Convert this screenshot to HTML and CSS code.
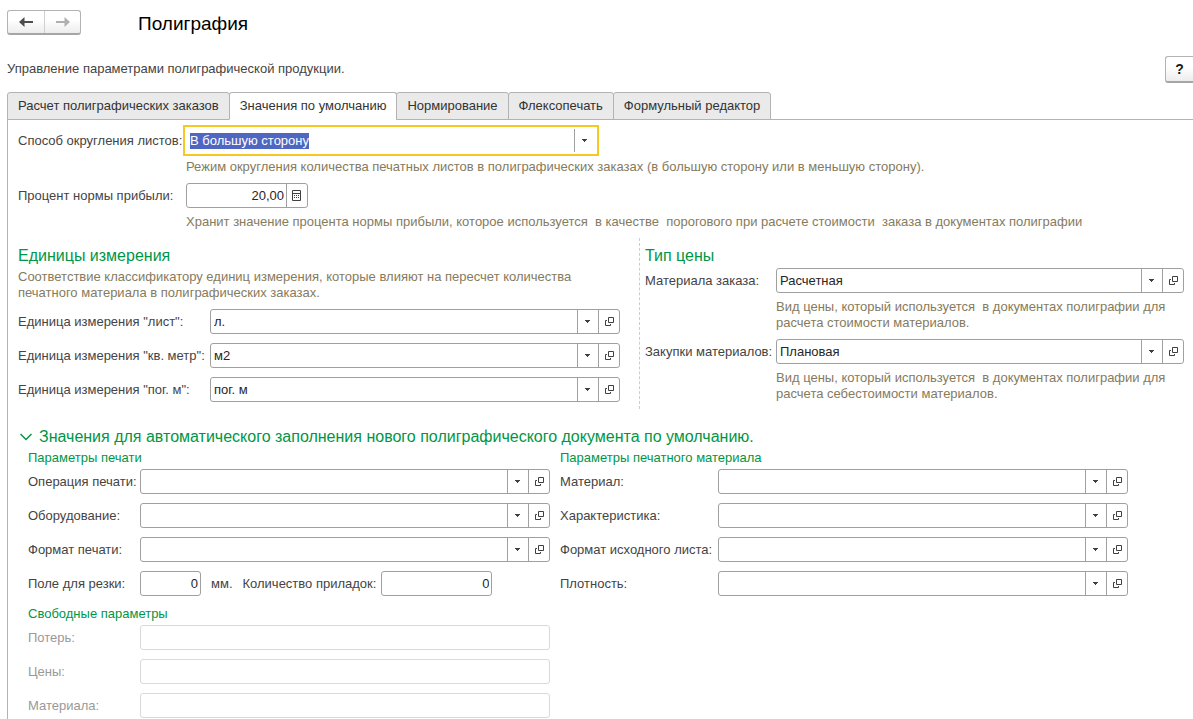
FILE: index.html
```html
<!DOCTYPE html>
<html lang="ru">
<head>
<meta charset="utf-8">
<title>Полиграфия</title>
<link rel="stylesheet" href="styles.css">
</head>
<body>
<svg class="sprite" aria-hidden="true">
  <symbol id="i-down" viewBox="0 0 6 3"><path d="M0 0h5v1h-1v1h-1v1h-1v-1h-1v-1h-1z" fill="#404040"/></symbol>
  <symbol id="i-open" viewBox="-1 0 10 9"><path d="M3.500.5h5v5h-5zM2 3.500H.5v5h5V7" fill="none" stroke="#404040"/></symbol>
</svg>

<header class="top">
  <div class="nav">
    <button class="nav-btn" type="button" aria-label="Назад"><svg width="14" height="10" viewBox="0 0 14 10"><path d="M0 5 5.500 0v4H14v2H5.500v4z" fill="#4d4d4d"/></svg></button>
    <button class="nav-btn" type="button" aria-label="Вперед"><svg width="14" height="10" viewBox="0 0 14 10"><path d="M14 5 8.500 0v4H0v2h8.500v4z" fill="#b0b0b0"/></svg></button>
  </div>
  <h1 class="title">Полиграфия</h1>
</header>

<div class="intro">
  <p class="intro-text">Управление параметрами полиграфической продукции.</p>
  <button class="help" type="button">?</button>
</div>

<div class="tabs" role="tablist">
  <button class="tab" type="button" role="tab">Расчет полиграфических заказов</button>
  <button class="tab tab-active" type="button" role="tab" aria-selected="true">Значения по умолчанию</button>
  <button class="tab" type="button" role="tab">Нормирование</button>
  <button class="tab" type="button" role="tab">Флексопечать</button>
  <button class="tab" type="button" role="tab">Формульный редактор</button>
</div>

<main class="panel">
  <section class="general">
    <label for="round">Способ округления листов:</label>
    <div class="field field-focus"><input id="round" value="В большую сторону"><button type="button" aria-label="Выбрать"><svg width="6" height="3"><use href="#i-down"/></svg></button></div>
    <p class="hint">Режим округления количества печатных листов в полиграфических заказах (в большую сторону или в меньшую сторону).</p>
    <label for="profit">Процент нормы прибыли:</label>
    <div class="field field-calc"><input id="profit" class="num" value="20,00"><button type="button" aria-label="Калькулятор"><svg width="10" height="11" viewBox="0 0 10 11"><path d="M.5.500h8v10h-8zM1 3.500h7" fill="none" stroke="#404040"/><path d="M2 5.500h5M2 7.500h5" fill="none" stroke="#404040" stroke-dasharray="1 1"/></svg></button></div>
    <p class="hint">Хранит значение процента нормы прибыли, которое используется  в качестве  порогового при расчете стоимости  заказа в документах полиграфии</p>
  </section>

  <div class="pair">
    <section class="units">
      <h2 class="heading">Единицы измерения</h2>
      <p class="hint">Соответствие классификатору единиц измерения, которые влияют на пересчет количества печатного материала в полиграфических заказах.</p>
      <div class="rows rows-units">
        <label for="u1">Единица измерения "лист":</label>
        <div class="field"><input id="u1" value="л."><button type="button" aria-label="Выбрать"><svg width="6" height="3"><use href="#i-down"/></svg></button><button type="button" aria-label="Открыть"><svg width="10" height="9"><use href="#i-open"/></svg></button></div>
        <label for="u2">Единица измерения "кв. метр":</label>
        <div class="field"><input id="u2" value="м2"><button type="button" aria-label="Выбрать"><svg width="6" height="3"><use href="#i-down"/></svg></button><button type="button" aria-label="Открыть"><svg width="10" height="9"><use href="#i-open"/></svg></button></div>
        <label for="u3">Единица измерения "пог. м":</label>
        <div class="field"><input id="u3" value="пог. м"><button type="button" aria-label="Выбрать"><svg width="6" height="3"><use href="#i-down"/></svg></button><button type="button" aria-label="Открыть"><svg width="10" height="9"><use href="#i-open"/></svg></button></div>
      </div>
    </section>
    <section class="prices">
      <h2 class="heading">Тип цены</h2>
      <div class="price-rows">
        <label for="p1">Материала заказа:</label>
        <div class="field"><input id="p1" value="Расчетная"><button type="button" aria-label="Выбрать"><svg width="6" height="3"><use href="#i-down"/></svg></button><button type="button" aria-label="Открыть"><svg width="10" height="9"><use href="#i-open"/></svg></button></div>
        <p class="hint">Вид цены, который используется  в документах полиграфии для расчета стоимости материалов.</p>
        <label for="p2">Закупки материалов:</label>
        <div class="field"><input id="p2" value="Плановая"><button type="button" aria-label="Выбрать"><svg width="6" height="3"><use href="#i-down"/></svg></button><button type="button" aria-label="Открыть"><svg width="10" height="9"><use href="#i-open"/></svg></button></div>
        <p class="hint">Вид цены, который используется  в документах полиграфии для расчета себестоимости материалов.</p>
      </div>
    </section>
  </div>

  <section class="defaults">
    <h2 class="heading heading-fold"><svg width="12" height="8" viewBox="0 0 12 8"><path d="M.5 1 6 6.500 11.500 1" fill="none" stroke="#009646" stroke-width="1.500"/></svg>Значения для автоматического заполнения нового полиграфического документа по умолчанию.</h2>
    <div class="columns">
      <div>
        <h3 class="subheading">Параметры печати</h3>
        <div class="rows rows-print">
          <label for="d1">Операция печати:</label>
          <div class="field"><input id="d1"><button type="button" aria-label="Выбрать"><svg width="6" height="3"><use href="#i-down"/></svg></button><button type="button" aria-label="Открыть"><svg width="10" height="9"><use href="#i-open"/></svg></button></div>
          <label for="d2">Оборудование:</label>
          <div class="field"><input id="d2"><button type="button" aria-label="Выбрать"><svg width="6" height="3"><use href="#i-down"/></svg></button><button type="button" aria-label="Открыть"><svg width="10" height="9"><use href="#i-open"/></svg></button></div>
          <label for="d3">Формат печати:</label>
          <div class="field"><input id="d3"><button type="button" aria-label="Выбрать"><svg width="6" height="3"><use href="#i-down"/></svg></button><button type="button" aria-label="Открыть"><svg width="10" height="9"><use href="#i-open"/></svg></button></div>
          <label for="d4">Поле для резки:</label>
          <div class="inline">
            <div class="field field-cut"><input id="d4" class="num" value="0"></div>
            <span class="unit">мм.</span>
            <label for="d5">Количество приладок:</label>
            <div class="field field-count"><input id="d5" class="num" value="0"></div>
          </div>
        </div>
        <h3 class="subheading subheading-free">Свободные параметры</h3>
        <div class="rows rows-print rows-off">
          <label for="f1">Потерь:</label>
          <div class="field"><input id="f1" disabled></div>
          <label for="f2">Цены:</label>
          <div class="field"><input id="f2" disabled></div>
          <label for="f3">Материала:</label>
          <div class="field"><input id="f3" disabled></div>
        </div>
      </div>
      <div>
        <h3 class="subheading">Параметры печатного материала</h3>
        <div class="rows rows-material">
          <label for="m1">Материал:</label>
          <div class="field"><input id="m1"><button type="button" aria-label="Выбрать"><svg width="6" height="3"><use href="#i-down"/></svg></button><button type="button" aria-label="Открыть"><svg width="10" height="9"><use href="#i-open"/></svg></button></div>
          <label for="m2">Характеристика:</label>
          <div class="field"><input id="m2"><button type="button" aria-label="Выбрать"><svg width="6" height="3"><use href="#i-down"/></svg></button><button type="button" aria-label="Открыть"><svg width="10" height="9"><use href="#i-open"/></svg></button></div>
          <label for="m3">Формат исходного листа:</label>
          <div class="field"><input id="m3"><button type="button" aria-label="Выбрать"><svg width="6" height="3"><use href="#i-down"/></svg></button><button type="button" aria-label="Открыть"><svg width="10" height="9"><use href="#i-open"/></svg></button></div>
          <label for="m4">Плотность:</label>
          <div class="field"><input id="m4"><button type="button" aria-label="Выбрать"><svg width="6" height="3"><use href="#i-down"/></svg></button><button type="button" aria-label="Открыть"><svg width="10" height="9"><use href="#i-open"/></svg></button></div>
        </div>
      </div>
    </div>
  </section>
</main>
<script src="main.js"></script>
</body>
</html>
```

FILE: styles.css
```css
* { box-sizing: border-box; }

body {
  display: flex;
  flex-direction: column;
  min-height: 100vh;
  margin: 0;
  padding: 10px 0 0 7px;
  background: #fff;
  color: #444;
  font: 13px/16px "Liberation Sans", Arial, sans-serif;
}

h1, h2, h3, p { margin: 0; font-weight: normal; }
button, input { font: inherit; color: inherit; }
.sprite { display: none; }

.top {
  display: flex;
  align-items: center;
  gap: 57px;
}

.nav {
  display: flex;
  border: 1px solid #b3b3b3;
  border-bottom: 2px solid #a6a6a6;
  border-radius: 3px;
  background: linear-gradient(#fff 40%, #ededed);
}

.nav-btn {
  display: flex;
  align-items: center;
  justify-content: center;
  width: 36px;
  height: 22px;
  padding: 0;
  border: 0;
  background: none;
}
.nav-btn + .nav-btn { border-left: 1px solid #d0d0d0; }

.title {
  padding-top: 2px;
  color: #000;
  font-size: 19px;
  line-height: 23px;
}

.intro {
  display: flex;
  align-items: center;
  justify-content: space-between;
  margin-top: 21px;
}

.intro-text { padding-bottom: 2px; }

.help {
  width: 28px;
  height: 27px;
  padding: 0;
  border: 1px solid #b3b3b3;
  border-right: 0;
  border-bottom: 2px solid #a6a6a6;
  border-radius: 3px 0 0 3px;
  background: linear-gradient(#fff 40%, #ededed);
  color: #1a1a1a;
  font-size: 14px;
  font-weight: bold;
}

.tabs {
  display: flex;
  margin-top: 9px;
  box-shadow: inset 0 -1px #b3b3b3;
}

.tab {
  height: 28px;
  padding: 0 10px;
  border: 1px solid #b3b3b3;
  border-radius: 3px 3px 0 0;
  background: #eaeaea;
  color: #333;
  white-space: nowrap;
}
.tab + .tab { margin-left: -1px; }
.tab-active { border-bottom-color: #fff; background: #fff; }

.panel {
  flex: 1;
  padding: 8px 9px 1px 10px;
  border-left: 1px solid #b3b3b3;
}

label { line-height: 25px; white-space: nowrap; }
.hint { color: #857b5e; white-space: pre-wrap; }

.field {
  display: flex;
  height: 25px;
  min-width: 0;
  border: 1px solid #a0a0a0;
  border-radius: 3px;
  background: #fff;
}

.field input {
  flex: 1;
  width: 0;
  min-width: 0;
  padding: 0 3px;
  border: 0;
  outline: 0;
  background: none;
  color: #262626;
}
.field .num { padding-right: 2px; text-align: right; }

.field button {
  display: flex;
  align-items: center;
  justify-content: center;
  width: 21px;
  padding: 0;
  border: 0;
  border-left: 1px solid #a0a0a0;
  background: none;
}
.field svg { flex: none; }

.general {
  display: grid;
  grid-template-columns: 168px 410fr 588fr;
}
.general .hint { grid-column: 2 / -1; margin: 6px 0 8px; }
.general label { grid-column: 1; }
.general .field-focus {
  border-color: #fff;
  border-radius: 0;
  outline: 2px solid #f8c822;
  outline-offset: 1px;
}
.field-focus input::selection { background: #4f67c2; color: #fff; }
.field-calc { width: 122px; }

.heading {
  color: #009646;
  font-size: 16px;
  line-height: 20px;
}

.pair {
  display: grid;
  grid-template-columns: 602fr 545fr;
  gap: 19px;
}
.units { padding-top: 8px; }
.units .hint { max-width: 560px; margin: 3px 0 8px; }
.prices {
  padding: 8px 0 7px 5px;
  border-left: 1px dashed #ccc;
}

.rows {
  display: grid;
  gap: 9px 0;
}
.rows-units { grid-template-columns: 192px 1fr; }
.rows-print { grid-template-columns: 112px 1fr; }
.rows-material { grid-template-columns: 158px 1fr; }

.price-rows {
  display: grid;
  grid-template-columns: 131px 1fr;
  margin-top: 2px;
}
.price-rows .hint { grid-column: 2; margin: 6px 0 8px; }
.price-rows .hint:last-child { margin-bottom: 0; }

.defaults { margin-top: 18px; }
.heading-fold {
  display: flex;
  align-items: center;
  gap: 7px;
  padding-left: 2px;
}
.columns {
  display: grid;
  grid-template-columns: 522fr 568fr 46fr;
  gap: 10px;
  margin: 3px 0 0 10px;
}
.subheading {
  margin-bottom: 3px;
  color: #009646;
  font-size: 13px;
}
.subheading-free { margin: 10px 0 3px; }

.inline { display: flex; }
.field-cut { width: 61px; }
.field-count { width: 111px; margin-left: 5px; }
.unit { margin: 0 10px; line-height: 25px; }

.rows-off label { color: #999; }
.rows-off .field { border-color: #d9d9d9; }
```

FILE: main.js
```js
const round = document.getElementById("round");
round.focus();
round.select();
```
